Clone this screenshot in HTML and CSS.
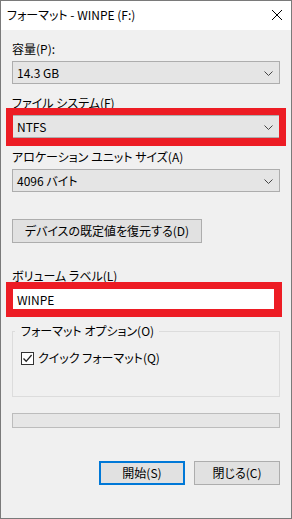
FILE: index.html
```html
<!DOCTYPE html>
<html lang="ja">
<head>
    <meta charset="UTF-8">
    <meta name="viewport" content="width=device-width, initial-scale=1.0">
    <title>フォーマット - WINPE (F:)</title>
    <link rel="stylesheet" href="styles.css">
</head>
<body>
    <div class="window">
        <div class="titlebar">
            <span class="title">フォーマット - WINPE (F:)</span>
            <svg class="close" width="12" height="12" viewBox="0 0 12 12">
                <path d="M1 1 L11 11 M11 1 L1 11" stroke="#000" stroke-width="1" fill="none"/>
            </svg>
        </div>

        <div class="content">
            <div class="field">
                <div class="label">容量(P):</div>
                <div class="combo">
                    <span>14.3 GB</span>
                    <svg class="chevron" width="9" height="5" viewBox="0 0 9 5"><path d="M0.5 0.5 L4.5 4.5 L8.5 0.5" stroke="#444" fill="none"/></svg>
                </div>
            </div>

            <div class="field">
                <div class="label">ファイル システム(F)</div>
                <div class="combo">
                    <span>NTFS</span>
                    <svg class="chevron" width="9" height="5" viewBox="0 0 9 5"><path d="M0.5 0.5 L4.5 4.5 L8.5 0.5" stroke="#444" fill="none"/></svg>
                    <span class="mark mark-combo"></span>
                </div>
            </div>

            <div class="field">
                <div class="label">アロケーション ユニット サイズ(A)</div>
                <div class="combo">
                    <span>4096 バイト</span>
                    <svg class="chevron" width="9" height="5" viewBox="0 0 9 5"><path d="M0.5 0.5 L4.5 4.5 L8.5 0.5" stroke="#444" fill="none"/></svg>
                </div>
            </div>

            <button class="btn restore">デバイスの既定値を復元する(D)</button>

            <div class="field volume">
                <div class="label">ボリューム ラベル(L)</div>
                <div class="textbox">
                    <span>WINPE</span>
                    <span class="mark mark-text"></span>
                </div>
            </div>

            <fieldset class="group">
                <legend>フォーマット オプション(O)</legend>
                <label class="check">
                    <span class="box">
                        <svg width="11" height="11" viewBox="0 0 11 11"><path d="M1.5 5.5 L4.2 8.3 L9.6 2" stroke="#222" stroke-width="1.3" fill="none"/></svg>
                    </span>
                    クイック フォーマット(Q)
                </label>
            </fieldset>

            <div class="progress"></div>

            <div class="actions">
                <button class="btn default">開始(S)</button>
                <button class="btn">閉じる(C)</button>
            </div>
        </div>
    </div>
</body>
</html>
```

FILE: styles.css
```css
* {
    margin: 0;
    padding: 0;
    box-sizing: border-box;
}

body {
    font-family: "Noto Sans CJK JP", "Noto Sans", sans-serif;
    font-size: 12px;
    font-feature-settings: "palt";
    color: #000;
    background: #f0f0f0;
}

.window {
    width: 292px;
    height: 519px;
    border: 1px solid #7a7a7a;
    background: #f0f0f0;
    display: flex;
    flex-direction: column;
}

.titlebar {
    height: 29px;
    background: #fff;
    display: flex;
    align-items: center;
    justify-content: space-between;
    padding: 0 8px 0 6px;
    flex-shrink: 0;
}

.title {
    line-height: 16px;
    margin-top: -2px;
}

.close {
    margin-top: -1px;
}

.content {
    flex: 1;
    padding: 11px 11px 0 11px;
    display: flex;
    flex-direction: column;
}

.field + .field {
    margin-top: 11px;
}

.label {
    line-height: 16px;
    margin-bottom: 4px;
}

.combo {
    position: relative;
    height: 23px;
    background: #e5e5e5;
    border: 1px solid #adadad;
    display: flex;
    align-items: center;
    justify-content: space-between;
    padding: 0 6px 0 4px;
    line-height: 16px;
}

.chevron {
    margin-top: 1px;
}

.mark {
    position: absolute;
    border: 7px solid #ed1c24;
    pointer-events: none;
}

.mark-combo {
    left: -7px;
    right: -7px;
    top: -8px;
    bottom: -9px;
    border-bottom-width: 8px;
}

.mark-text {
    left: -7px;
    right: -3px;
    top: -7px;
    bottom: -7px;
    border-right-width: 8px;
    border-bottom-width: 8px;
}

.btn {
    font-family: inherit;
    font-size: 12px;
    font-feature-settings: "palt";
    color: #000;
    background: #e1e1e1;
    border: 1px solid #adadad;
    height: 24px;
    line-height: 16px;
}

.restore {
    width: 190px;
    margin-top: 27px;
}

.volume {
    margin-top: 25px;
}

.volume .label {
    margin-bottom: 4px;
}

.textbox {
    position: relative;
    height: 23px;
    background: #fff;
    border: 1px solid #7a7a7a;
    display: flex;
    align-items: center;
    padding: 0 4px;
    line-height: 16px;
}

.group {
    margin-top: 12px;
    border: 1px solid #dcdcdc;
    padding: 0 0 30px 2px;
}

.group legend {
    padding: 0 5px 0 6px;
    line-height: 16px;
}

.check {
    display: flex;
    align-items: center;
    gap: 4px;
    margin: 11px 0 0 6px;
    line-height: 16px;
}

.box {
    width: 13px;
    height: 13px;
    border: 1px solid #333;
    background: #fff;
    display: flex;
    align-items: center;
    justify-content: center;
}

.progress {
    margin-top: 16px;
    height: 15px;
    background: #e6e6e6;
    border: 1px solid #bcbcbc;
}

.actions {
    margin-top: 33px;
    display: flex;
    justify-content: flex-end;
    gap: 9px;
}

.actions .btn {
    width: 86px;
}

.btn.default {
    border: 2px solid #0078d7;
}
```
